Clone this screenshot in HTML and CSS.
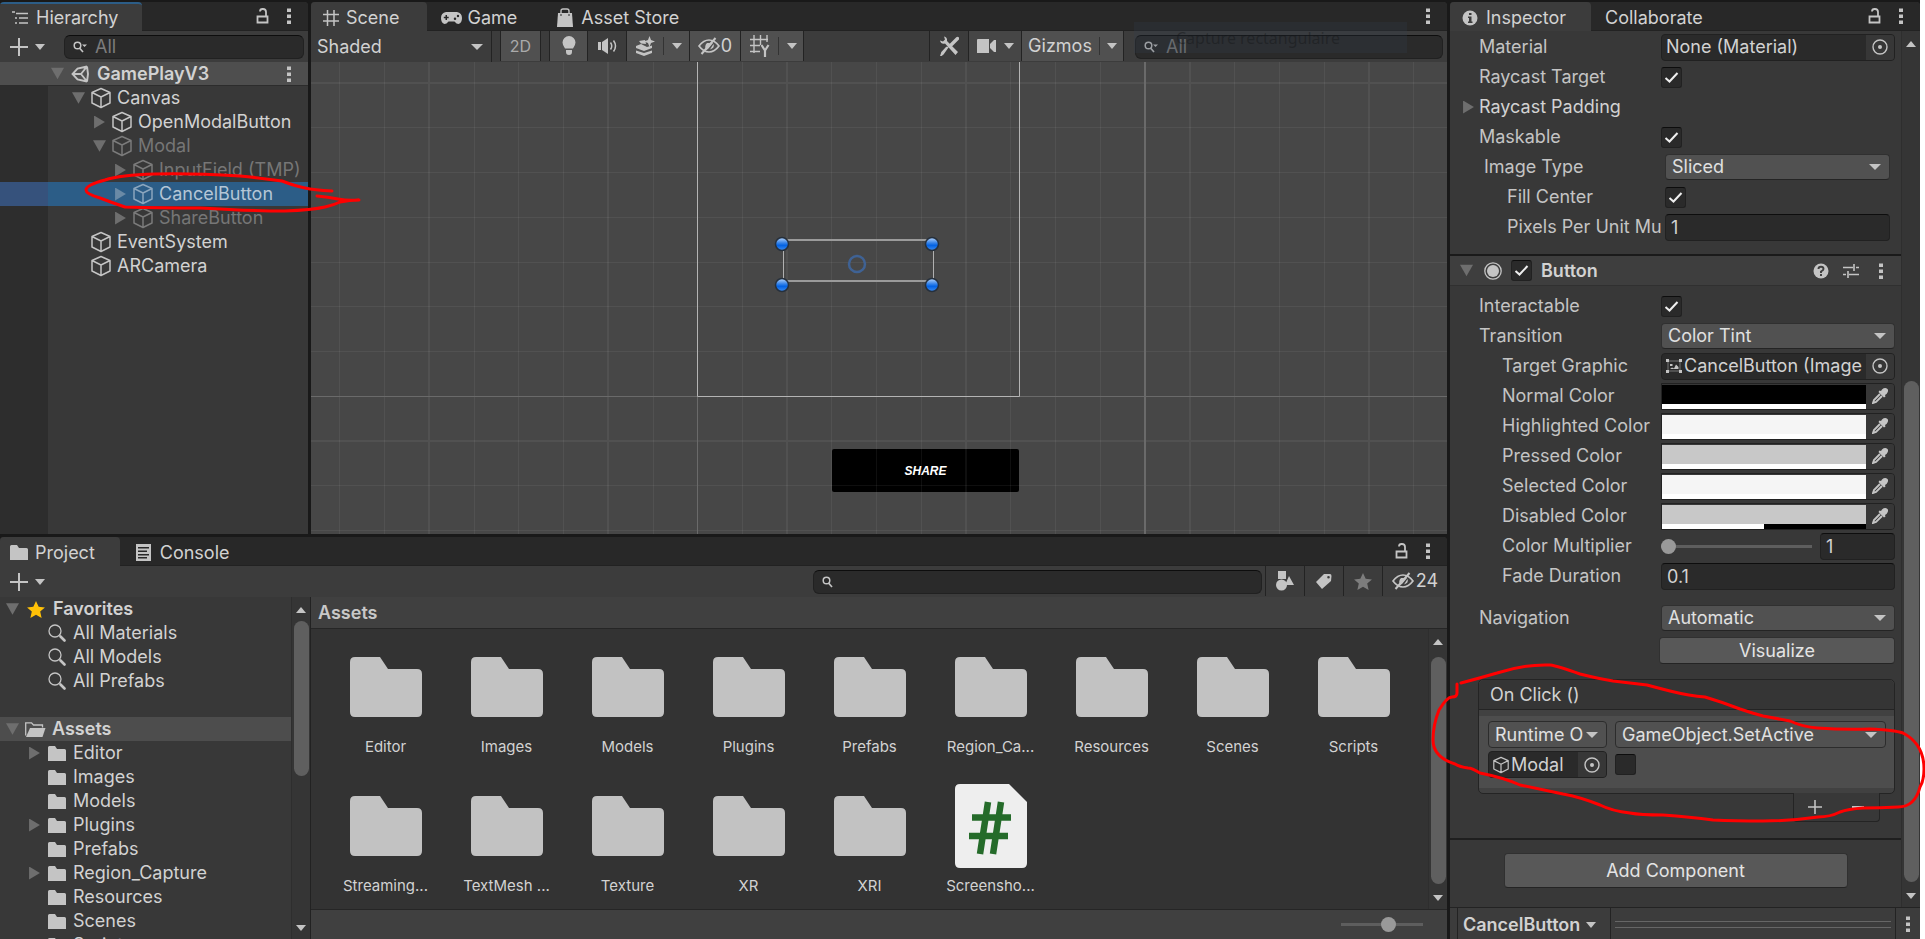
FILE: index.html
```html
<!DOCTYPE html>
<html lang="en">
<head>
<meta charset="utf-8">
<title>GamePlayV3 - Editor</title>
<link rel="stylesheet" href="styles.css">
</head>
<body>
<svg class="sprite" aria-hidden="true">
  <symbol id="i-cube" viewBox="0 0 20 22"><path d="M10 1.5 19 5.5V16L10 20.5 1 16V5.5ZM1 5.5 10 10 19 5.5M10 10V20.5" fill="none" stroke="currentColor" stroke-width="1.5" stroke-linejoin="round"/></symbol>
  <symbol id="i-folder" viewBox="0 0 18 15"><path d="M0 1.500Q0 0 1.500 0H7L9 3H16.500Q18 3 18 4.500V15H0Z" fill="currentColor"/></symbol>
  <symbol id="i-folder-big" viewBox="0 0 72 60"><path d="M0 5Q0 0 5 0H30L38 12H67Q72 12 72 17V55Q72 60 67 60H5Q0 60 0 55Z" fill="#c2c2c2"/></symbol>
  <symbol id="i-folder-open" viewBox="0 0 21 15"><path d="M.7 13.500V.8H6.500L8.500 3H17.500V5.500" fill="none" stroke="currentColor" stroke-width="1.300"/><path d="M5 6H20.500L17.500 15H1Z" fill="currentColor"/></symbol>
  <symbol id="i-lens" viewBox="0 0 18 18"><circle cx="7" cy="7" r="6" fill="none" stroke="currentColor" stroke-width="1.300"/><path d="M12.500 12.500 16.500 16.500" stroke="currentColor" stroke-width="2.600" stroke-linecap="round"/></symbol>
  <symbol id="i-find" viewBox="0 0 14 12"><circle cx="4.500" cy="4.500" r="3.300" fill="none" stroke="currentColor" stroke-width="1.500"/><path d="M6.500 7 10 11" stroke="currentColor" stroke-width="1.700"/></symbol>
  <symbol id="i-find-menu" viewBox="0 0 14 12"><circle cx="4.500" cy="4.500" r="3.300" fill="none" stroke="currentColor" stroke-width="1.500"/><path d="M6.500 7 10 11" stroke="currentColor" stroke-width="1.700"/><path d="M9 3.500H14L11.500 6Z" fill="currentColor"/></symbol>
  <symbol id="i-lock" viewBox="0 0 13 16"><path d="M1.500 8.500H11.500V14.500H1.500ZM10 8V4Q10 1 7 1H6.500Q4 1 4 3.500" fill="none" stroke="currentColor" stroke-width="1.800"/></symbol>
  <symbol id="i-dots" viewBox="0 0 4 16"><path d="M0 .5H4V4H0ZM0 6.500H4V10H0ZM0 12.500H4V16H0Z" fill="currentColor"/></symbol>
  <symbol id="i-plus" viewBox="0 0 18 18"><path d="M9 0V18M0 9H18" stroke="currentColor" stroke-width="2"/></symbol>
  <symbol id="i-list" viewBox="0 0 16 14"><path d="M0 1H3M4 2.500H16M7 7H16M7 12H16M3 7H5M3 12H5" stroke="currentColor" stroke-width="1.600"/></symbol>
  <symbol id="i-hash" viewBox="0 0 16 16"><path d="M4.500 0V16M11 0V16M0 4.500H16M0 11H16" stroke="currentColor" stroke-width="1.500"/></symbol>
  <symbol id="i-pad" viewBox="0 0 21 12"><path fill-rule="evenodd" d="M5 0H16Q21 1 21 6 21 11 17.500 12 15.500 12 13.500 9.500H7.500Q5.500 12 3.500 12 0 11 0 6 0 1 5 0ZM4.500 3V4.800H2.800V6.200H4.500V8H6V6.200H7.700V4.800H6V3ZM14 5.500A1.200 1.200 0 1 0 14 8 1.200 1.200 0 1 0 14 5.500ZM17 2.800A1.200 1.200 0 1 0 17 5.200 1.200 1.200 0 1 0 17 2.800Z" fill="currentColor"/></symbol>
  <symbol id="i-bag" viewBox="0 0 16 19"><path d="M1 5H15L16 19H0Z" fill="currentColor"/><path d="M4 8V3Q4 1 6 1H10Q12 1 12 3V8" fill="none" stroke="currentColor" stroke-width="1.400"/><path d="M4 6V8M12 6V8" stroke="#282828"/></symbol>
  <symbol id="i-info" viewBox="0 0 16 16"><circle cx="8" cy="8" r="7.500" fill="currentColor"/><path d="M7 3H9.500V5H7ZM6 6.500H9.500V11.500H10.500V13H6V11.500H7V8H6Z" fill="#3c3c3c"/></symbol>
  <symbol id="i-unity" viewBox="0 0 18 18"><path d="M16 1.500 6.500 3.500 1.500 9 6.500 14.500 16 16.500M16 1.500 17 9 16 16.500M1.500 9H10M10 9 16 1.500M10 9 16 16.500" fill="none" stroke="currentColor" stroke-width="1.900"/></symbol>
  <symbol id="i-console" viewBox="0 0 15 17"><path fill-rule="evenodd" d="M0 0H15V17H0ZM2 3V4.500H13V3ZM2 6.500V8H11V6.500ZM2 10V11.500H13V10ZM2 13V14.500H11V13Z" fill="currentColor"/></symbol>
  <symbol id="i-star" viewBox="0 0 20 19"><path d="M10 0 13 6.500 20 7.200 14.700 11.800 16.300 19 10 15.300 3.700 19 5.300 11.800 0 7.200 7 6.500Z" fill="currentColor"/></symbol>
  <symbol id="i-bulb" viewBox="0 0 14 20"><path d="M7 0A6.500 6.500 0 0 1 13.500 6.500Q13.500 9 11 12.500H3Q.5 9 .5 6.500A6.500 6.500 0 0 1 7 0ZM4 14H10V16Q10 19 7 19 4 19 4 16Z" fill="currentColor"/></symbol>
  <symbol id="i-audio" viewBox="0 0 19 16"><path d="M0 4H3V12H0ZM4 4 10 0V16L4 12Z" fill="currentColor"/><path d="M12.500 4.500Q15 8 12.500 11.500M15.500 2.500Q19.500 8 15.500 13.500" fill="none" stroke="currentColor" stroke-width="1.500"/></symbol>
  <symbol id="i-effects" viewBox="0 0 19 20"><path d="M0 10 5 8 11 11 16 9.500V12L8 15 0 12ZM0 14.500 8 17 16 14.500V17L8 20 0 17Z" fill="currentColor"/><path d="M13.500 0 15 4 19 5.500 15 7 13.500 11 12 7 8 5.500 12 4ZM3 5 9 4 10 8 5 7.500Z" fill="currentColor"/></symbol>
  <symbol id="i-eye" viewBox="0 0 22 18"><path d="M1 9Q5.500 3 11 3 16.500 3 21 9 16.500 15 11 15 5.500 15 1 9Z" fill="none" stroke="currentColor" stroke-width="1.700"/><path d="M8 13Q6 9 9 6L15 6 10 12ZM12 12.500 15.500 7Q17 11 12 12.500Z" fill="currentColor"/><path d="M3.500 17 17.500 1" stroke="currentColor" stroke-width="2"/></symbol>
  <symbol id="i-gridy" viewBox="0 0 20 22"><path d="M4 0V18M10.500 0V10M17 0V7M0 4.500H18M0 10.500H10M0 16.500H10" stroke="currentColor" stroke-width="1.400" fill="none"/><path d="M11.500 10 15 15.500 18.500 10M15 15V22" stroke="currentColor" stroke-width="2.200" fill="none"/></symbol>
  <symbol id="i-tools" viewBox="0 0 19 20"><path d="M4 0.500Q7.500 1 7 5L18 16 15.500 19 5 7.500Q1 8.500 0 4.500L3 5.500 5 3.500Z" fill="currentColor"/><path d="M17.500 2.500 10.500 9.500" stroke="currentColor" stroke-width="3.400" stroke-linecap="round"/><path d="M7.500 11.500 3 18 1 19.500 2 16.500 6.500 11.500Z" stroke="currentColor" stroke-width="1.500" fill="currentColor"/></symbol>
  <symbol id="i-camera" viewBox="0 0 19 14"><path d="M0 1Q0 0 1 0H12V14H0ZM13 5 17 1H19V13H17L13 9Z" fill="currentColor"/></symbol>
  <symbol id="i-shapes" viewBox="0 0 18 20"><path d="M2 0H10V8H2ZM13 5 18 14H9Z" fill="currentColor"/><circle cx="5.500" cy="14" r="5.500" fill="currentColor"/></symbol>
  <symbol id="i-tag" viewBox="0 0 16 16"><path fill-rule="evenodd" d="M8 1H14Q15.500 1 15.500 3L15 8 6 16 0 9ZM12.500 3A1.300 1.300 0 1 0 12.500 5.600 1.300 1.300 0 1 0 12.500 3Z" fill="currentColor"/></symbol>
  <symbol id="i-target" viewBox="0 0 16 16"><circle cx="8" cy="8" r="7" fill="none" stroke="currentColor" stroke-width="1.400"/><circle cx="8" cy="8" r="2" fill="currentColor"/></symbol>
  <symbol id="i-image" viewBox="0 0 16 14"><path d="M2 2H14V12H2Z" fill="none" stroke="currentColor" stroke-opacity=".5"/><path d="M0 0H3V3H0ZM13 0H16V3H13ZM0 11H3V14H0ZM13 11H16V14H13ZM4 5H6.500V7H4ZM4 10 6 8.500 8 9.500 10 5.500 12.500 8V10Z" fill="currentColor"/></symbol>
  <symbol id="i-dropper" viewBox="0 0 16 16"><path d="M10 1.500 9 3 7.500 2.500 6.500 4 12 9.500 13.500 8.500 13 7 14.500 6Q17 3 15.500 1 13 -1 10 1.500Z" fill="currentColor"/><path d="M8 6 2 12 1 15 4 14 10 8" fill="none" stroke="currentColor" stroke-width="1.900"/></symbol>
  <symbol id="i-help" viewBox="0 0 16 16"><circle cx="8" cy="8" r="7.500" fill="currentColor"/><path d="M5.500 6Q5.500 3.700 8 3.700 10.500 3.700 10.500 6 10.500 7.300 8 8.500V10M8 11V13" fill="none" stroke="#3e3e3e" stroke-width="1.900"/></symbol>
  <symbol id="i-preset" viewBox="0 0 16 14"><path d="M0 3.500H10M13 3.500H16M11 0V7M0 10.500H3M6 10.500H16M5 7V14" stroke="currentColor" stroke-width="1.600"/></symbol>
  <symbol id="i-button" viewBox="0 0 18 18"><circle cx="9" cy="9" r="8.200" fill="none" stroke="currentColor" stroke-width="1.300"/><circle cx="9" cy="9" r="6" fill="currentColor"/></symbol>
  <symbol id="i-script" viewBox="0 0 72 84"><path d="M0 5Q0 0 5 0H54L72 18V79Q72 84 67 84H5Q0 84 0 79Z" fill="#eee"/><path d="M33 18 25 70M46 18 38 70M17 33.500H56M14 52H53" stroke="#256b2a" stroke-width="6.500"/></symbol>
</svg>

<div class="app">
  <section class="panel hierarchy">
    <div class="tabs">
      <button class="tab active focus"><svg width="16" height="14"><use href="#i-list"/></svg>Hierarchy</button>
      <span class="tab-tools"><svg width="13" height="16"><use href="#i-lock"/></svg><svg width="4" height="16"><use href="#i-dots"/></svg></span>
    </div>
    <div class="toolbar">
      <button class="add" aria-label="Create"><svg width="18" height="18"><use href="#i-plus"/></svg><i class="caret"></i></button>
      <label class="search"><svg width="14" height="12"><use href="#i-find-menu"/></svg><input type="text" placeholder="All" aria-label="Search hierarchy"></label>
    </div>
    <div class="scene-root"><i class="fold open"></i><svg width="18" height="18"><use href="#i-unity"/></svg><b>GamePlayV3</b><svg class="end" width="4" height="16"><use href="#i-dots"/></svg></div>
    <ul class="objects">
      <li class="d0"><i class="fold open"></i><svg width="20" height="22"><use href="#i-cube"/></svg>Canvas</li>
      <li class="d1"><i class="fold"></i><svg width="20" height="22"><use href="#i-cube"/></svg>OpenModalButton</li>
      <li class="d1 off"><i class="fold open"></i><svg width="20" height="22"><use href="#i-cube"/></svg>Modal</li>
      <li class="d2 off"><i class="fold"></i><svg width="20" height="22"><use href="#i-cube"/></svg>InputField (TMP)</li>
      <li class="d2 selected"><i class="fold"></i><svg width="20" height="22"><use href="#i-cube"/></svg>CancelButton</li>
      <li class="d2 off"><i class="fold"></i><svg width="20" height="22"><use href="#i-cube"/></svg>ShareButton</li>
      <li class="d0"><i class="fold none"></i><svg width="20" height="22"><use href="#i-cube"/></svg>EventSystem</li>
      <li class="d0"><i class="fold none"></i><svg width="20" height="22"><use href="#i-cube"/></svg>ARCamera</li>
    </ul>
  </section>

  <section class="panel scene">
    <div class="tabs">
      <button class="tab active"><svg width="16" height="16"><use href="#i-hash"/></svg>Scene</button>
      <button class="tab"><svg width="21" height="12"><use href="#i-pad"/></svg>Game</button>
      <button class="tab store"><svg width="16" height="19"><use href="#i-bag"/></svg>Asset Store</button>
      <span class="tab-tools"><svg width="4" height="16"><use href="#i-dots"/></svg></span>
    </div>
    <div class="toolbar scene-bar">
      <span class="pick shading"><select aria-label="Draw mode"><option>Shaded</option></select></span>
      <button class="tool on two-d">2D</button>
      <button class="tool on bulb" aria-label="Lighting"><svg width="14" height="20"><use href="#i-bulb"/></svg></button>
      <button class="tool" aria-label="Audio"><svg width="19" height="16"><use href="#i-audio"/></svg></button>
      <button class="tool on wide" aria-label="Effects"><svg width="19" height="20"><use href="#i-effects"/></svg><i class="bar"></i><i class="caret"></i></button>
      <button class="tool on eye"><svg width="22" height="18"><use href="#i-eye"/></svg>0</button>
      <button class="tool on wide" aria-label="Grid"><svg width="20" height="22"><use href="#i-gridy"/></svg><i class="bar"></i><i class="caret"></i></button>
      <span class="space"></span>
      <button class="tool first" aria-label="Tools"><svg width="19" height="20"><use href="#i-tools"/></svg></button>
      <button class="tool cam" aria-label="Camera"><svg width="19" height="14"><use href="#i-camera"/></svg><i class="caret"></i></button>
      <button class="tool on gizmos">Gizmos<i class="bar"></i><i class="caret"></i></button>
      <label class="search"><svg width="14" height="12"><use href="#i-find-menu"/></svg><input type="text" placeholder="All" aria-label="Search scene"></label>
      <span class="ghost">Capture rectangulaire</span>
    </div>
    <div class="viewport">
      <button class="share">SHARE</button>
      <svg class="lines" width="100%" height="100%">
        <g stroke="#fff" stroke-opacity=".06">
          <path d="M28.500 0V600M73.500 0V600M163.500 0V600M207.500 0V600M252.500 0V600M342.500 0V600M431.500 0V600M520.500 0V600M565.500 0V600M610.500 0V600M699.500 0V600M744.500 0V600M789.500 0V600M923.500 0V600M968.500 0V600M1013.500 0V600M1102.500 0V600"/>
          <path d="M0 65.500H3000M0 110.500H3000M0 155.500H3000M0 200.500H3000M0 244.500H3000M0 289.500H3000M0 423.500H3000M0 468.500H3000"/>
          <path stroke-width="2" d="M118 0V600M297 0V600M476 0V600M655 0V600M879 0V600M1058 0V600M0 21H3000M0 379H3000"/>
        </g>
        <path d="M386.500 334V600M0 334.500H3000" stroke="#6a6a6a"/>
        <path d="M834 0V600" stroke="#6a6a6a" stroke-width="2"/>
        <path d="M386.500 0V334.500H708.500V0" fill="none" stroke="#b4b4b4"/>
        <path d="M472.500 178V219M622.500 178V219" stroke="#b0b0b0"/>
        <path d="M472 178H622M472 219H622" stroke="#9b9b9b" stroke-width="2"/>
        <defs><linearGradient id="dot" x2="0" y2="1"><stop offset=".1" stop-color="#9cc4f8"/><stop offset=".4" stop-color="#3a86ea"/><stop offset=".6" stop-color="#0262e4"/><stop offset="1" stop-color="#3d8cf0"/></linearGradient></defs>
        <g fill="url(#dot)" stroke="#26303c" stroke-width="1.500"><circle cx="471" cy="182" r="6.500"/><circle cx="621" cy="182" r="6.500"/><circle cx="471" cy="223" r="6.500"/><circle cx="621" cy="223" r="6.500"/></g>
        <circle cx="546" cy="202" r="8" fill="none" stroke="#3f6294" stroke-width="2.500"/>
      </svg>
    </div>
  </section>

  <section class="panel inspector">
    <div class="tabs">
      <button class="tab active"><svg width="16" height="16"><use href="#i-info"/></svg>Inspector</button>
      <button class="tab plain">Collaborate</button>
      <span class="tab-tools"><svg width="13" height="16"><use href="#i-lock"/></svg><svg width="4" height="16"><use href="#i-dots"/></svg></span>
    </div>
    <div class="split">
      <div class="form">
        <div class="row"><label for="mat">Material</label><span class="object"><input id="mat" type="text" value="None (Material)"><button aria-label="Select material"><svg width="16" height="16"><use href="#i-target"/></svg></button></span></div>
        <div class="row"><label for="rt">Raycast Target</label><input id="rt" type="checkbox" checked></div>
        <div class="row foldrow"><i class="fold"></i><span class="title">Raycast Padding</span></div>
        <div class="row"><label for="mask">Maskable</label><input id="mask" type="checkbox" checked></div>
        <div class="row inset"><label for="it">Image Type</label><span class="pick boxed"><select id="it"><option>Sliced</option></select></span></div>
        <div class="row inset sub"><label for="fc">Fill Center</label><input id="fc" type="checkbox" checked></div>
        <div class="row inset sub"><label for="ppu">Pixels Per Unit Multiplier</label><input id="ppu" type="text" value="1"></div>

        <div class="component"><i class="fold open"></i><svg width="18" height="18"><use href="#i-button"/></svg><input id="btn" type="checkbox" checked><label for="btn">Button</label><span class="component-tools"><svg width="16" height="16"><use href="#i-help"/></svg><svg width="16" height="14"><use href="#i-preset"/></svg><svg class="end" width="4" height="16"><use href="#i-dots"/></svg></span></div>

        <div class="row"><label for="inter">Interactable</label><input id="inter" type="checkbox" checked></div>
        <div class="row"><label for="trans">Transition</label><span class="pick boxed"><select id="trans"><option>Color Tint</option></select></span></div>
        <div class="row sub"><label for="tg">Target Graphic</label><span class="object"><svg width="16" height="14"><use href="#i-image"/></svg><input id="tg" type="text" value="CancelButton (Image"><button aria-label="Select graphic"><svg width="16" height="16"><use href="#i-target"/></svg></button></span></div>
        <div class="row sub"><label for="c1">Normal Color</label><span class="color"><span class="swatch"><input id="c1" type="color" value="#000000"><i class="alpha"></i></span><button aria-label="Pick normal color"><svg width="16" height="16"><use href="#i-dropper"/></svg></button></span></div>
        <div class="row sub"><label for="c2">Highlighted Color</label><span class="color"><span class="swatch"><input id="c2" type="color" value="#f5f5f5"><i class="alpha"></i></span><button aria-label="Pick highlighted color"><svg width="16" height="16"><use href="#i-dropper"/></svg></button></span></div>
        <div class="row sub"><label for="c3">Pressed Color</label><span class="color"><span class="swatch"><input id="c3" type="color" value="#c8c8c8"><i class="alpha"></i></span><button aria-label="Pick pressed color"><svg width="16" height="16"><use href="#i-dropper"/></svg></button></span></div>
        <div class="row sub"><label for="c4">Selected Color</label><span class="color"><span class="swatch"><input id="c4" type="color" value="#f5f5f5"><i class="alpha"></i></span><button aria-label="Pick selected color"><svg width="16" height="16"><use href="#i-dropper"/></svg></button></span></div>
        <div class="row sub"><label for="c5">Disabled Color</label><span class="color"><span class="swatch"><input id="c5" type="color" value="#c8c8c8"><i class="alpha half"></i></span><button aria-label="Pick disabled color"><svg width="16" height="16"><use href="#i-dropper"/></svg></button></span></div>
        <div class="row sub"><label for="cm">Color Multiplier</label><input id="cm" type="range" min="1" max="5" value="1"><input class="short" type="text" value="1" aria-label="Color multiplier value"></div>
        <div class="row sub"><label for="fd">Fade Duration</label><input id="fd" type="text" value="0.1"></div>
        <div class="row nav"><label for="nav">Navigation</label><span class="pick boxed"><select id="nav"><option>Automatic</option></select></span></div>
        <button class="push visualize">Visualize</button>

        <div class="event">
          <div class="event-box">
            <div class="event-head">On Click ()</div>
            <div class="event-item">
              <span class="pick boxed"><select aria-label="Call state"><option>Runtime Only</option></select></span>
              <span class="pick boxed"><select aria-label="Function"><option>GameObject.SetActive</option></select></span>
              <span class="object"><svg width="16" height="18"><use href="#i-cube"/></svg><input type="text" value="Modal" aria-label="Target object"><button aria-label="Select object"><svg width="16" height="16"><use href="#i-target"/></svg></button></span>
              <input type="checkbox" aria-label="Argument">
            </div>
          </div>
          <div class="event-foot"><button aria-label="Add"><svg width="14" height="14"><use href="#i-plus"/></svg></button><button aria-label="Remove"><i class="minus"></i></button></div>
        </div>
        <div class="add-area"><button class="push add-component">Add Component</button></div>
      </div>
      <div class="scroll"><i class="up"></i><i class="thumb insp"></i><i class="down"></i></div>
    </div>
    <div class="preview-bar"><button>CancelButton<i class="caret"></i></button><span class="grip"></span><span class="more"><svg width="4" height="16"><use href="#i-dots"/></svg></span></div>
  </section>

  <section class="panel project">
    <div class="tabs">
      <button class="tab active"><svg width="18" height="15"><use href="#i-folder"/></svg>Project</button>
      <button class="tab"><svg width="15" height="17"><use href="#i-console"/></svg>Console</button>
      <span class="tab-tools"><svg width="13" height="16"><use href="#i-lock"/></svg><svg width="4" height="16"><use href="#i-dots"/></svg></span>
    </div>
    <div class="toolbar">
      <button class="add" aria-label="Create asset"><svg width="18" height="18"><use href="#i-plus"/></svg><i class="caret"></i></button>
      <span class="space"></span>
      <label class="search project-search"><svg width="14" height="12"><use href="#i-find"/></svg><input type="text" aria-label="Search project"></label>
      <button class="tool first" aria-label="Filter by type"><svg width="18" height="20"><use href="#i-shapes"/></svg></button>
      <button class="tool" aria-label="Filter by label"><svg width="16" height="16"><use href="#i-tag"/></svg></button>
      <button class="tool dim" aria-label="Favorites"><svg width="18" height="17"><use href="#i-star"/></svg></button>
      <button class="tool hidden-count"><svg width="22" height="18"><use href="#i-eye"/></svg>24</button>
    </div>
    <div class="browser">
      <ul class="tree">
        <li class="top"><i class="fold open"></i><svg class="gold" width="18" height="17"><use href="#i-star"/></svg><b>Favorites</b></li>
        <li><i class="fold none"></i><svg width="18" height="18"><use href="#i-lens"/></svg>All Materials</li>
        <li><i class="fold none"></i><svg width="18" height="18"><use href="#i-lens"/></svg>All Models</li>
        <li><i class="fold none"></i><svg width="18" height="18"><use href="#i-lens"/></svg>All Prefabs</li>
        <li class="top current"><i class="fold open"></i><svg width="21" height="15"><use href="#i-folder-open"/></svg><b>Assets</b></li>
        <li><i class="fold"></i><svg width="18" height="15"><use href="#i-folder"/></svg>Editor</li>
        <li><i class="fold none"></i><svg width="18" height="15"><use href="#i-folder"/></svg>Images</li>
        <li><i class="fold none"></i><svg width="18" height="15"><use href="#i-folder"/></svg>Models</li>
        <li><i class="fold"></i><svg width="18" height="15"><use href="#i-folder"/></svg>Plugins</li>
        <li><i class="fold none"></i><svg width="18" height="15"><use href="#i-folder"/></svg>Prefabs</li>
        <li><i class="fold"></i><svg width="18" height="15"><use href="#i-folder"/></svg>Region_Capture</li>
        <li><i class="fold none"></i><svg width="18" height="15"><use href="#i-folder"/></svg>Resources</li>
        <li><i class="fold none"></i><svg width="18" height="15"><use href="#i-folder"/></svg>Scenes</li>
        <li><i class="fold none"></i><svg width="18" height="15"><use href="#i-folder"/></svg>Scripts</li>
      </ul>
      <div class="scroll tree-scroll"><i class="up"></i><i class="thumb tree-thumb"></i><i class="down"></i></div>
      <div class="files">
        <div class="crumb">Assets</div>
        <div class="split">
          <ul class="grid">
            <li><span><svg width="72" height="60"><use href="#i-folder-big"/></svg></span>Editor</li>
            <li><span><svg width="72" height="60"><use href="#i-folder-big"/></svg></span>Images</li>
            <li><span><svg width="72" height="60"><use href="#i-folder-big"/></svg></span>Models</li>
            <li><span><svg width="72" height="60"><use href="#i-folder-big"/></svg></span>Plugins</li>
            <li><span><svg width="72" height="60"><use href="#i-folder-big"/></svg></span>Prefabs</li>
            <li><span><svg width="72" height="60"><use href="#i-folder-big"/></svg></span>Region_Ca...</li>
            <li><span><svg width="72" height="60"><use href="#i-folder-big"/></svg></span>Resources</li>
            <li><span><svg width="72" height="60"><use href="#i-folder-big"/></svg></span>Scenes</li>
            <li><span><svg width="72" height="60"><use href="#i-folder-big"/></svg></span>Scripts</li>
            <li><span><svg width="72" height="60"><use href="#i-folder-big"/></svg></span>Streaming...</li>
            <li><span><svg width="72" height="60"><use href="#i-folder-big"/></svg></span>TextMesh ...</li>
            <li><span><svg width="72" height="60"><use href="#i-folder-big"/></svg></span>Texture</li>
            <li><span><svg width="72" height="60"><use href="#i-folder-big"/></svg></span>XR</li>
            <li><span><svg width="72" height="60"><use href="#i-folder-big"/></svg></span>XRI</li>
            <li><span><svg width="72" height="84"><use href="#i-script"/></svg></span>Screensho...</li>
          </ul>
          <div class="scroll"><i class="up"></i><i class="thumb"></i><i class="down"></i></div>
        </div>
        <div class="size-bar"><input type="range" min="0" max="100" value="60" aria-label="Icon size"></div>
      </div>
    </div>
  </section>
</div>

<svg class="ink" width="1925" height="939" fill="none" stroke="#f00" stroke-width="3" stroke-linecap="round" stroke-linejoin="round" aria-hidden="true">
  <path d="M332 191Q314 190 305 188Q295 186 282 181Q262 178 240 176Q190 173 155 174Q120 175 105 180Q86 185 86 190Q86 194 100 198Q113 203 125 207Q160 208 200 208Q250 211 285 211Q312 210 325 207Q334 205 340 202Q350 200 359 200Q348 201 338 199Q328 197 317 196"/>
  <path d="M1461 683Q1480 678 1497 673Q1525 664 1550 665Q1558 666 1580 674Q1600 679 1613 681L1647 685Q1658 688 1670 691Q1690 696 1705 697Q1722 702 1740 709Q1755 714 1763 716L1790 721Q1803 727 1817 728Q1845 730 1870 729Q1894 730 1903 733Q1924 744 1924 769Q1924 780 1920 787Q1915 807 1898 807Q1880 808 1863 808Q1848 809 1840 812Q1830 817 1818 817Q1790 821 1763 821Q1735 821 1713 820Q1690 817 1663 815Q1640 815 1630 813Q1612 811 1600 805Q1580 797 1563 794L1520 785Q1505 778 1480 773Q1472 768 1468 768Q1460 767 1455 764Q1433 757 1433 740Q1433 725 1439 710Q1447 697 1452 697Q1457 697 1457 693V684"/>
</svg>
</body>
</html>
```

FILE: styles.css
```css
* { box-sizing: border-box; }
body { margin: 0; padding-right: 5px; background: #fff; color: #d2d2d2; font: 18px/24px Inter, "Noto Sans", sans-serif; overflow: hidden; }
ul { list-style: none; margin: 0; padding: 0; }
button, input, select { font: inherit; color: inherit; background: none; border: 0; margin: 0; padding: 0; min-width: 0; }
svg { display: block; flex: none; color: #c4c4c4; }
.sprite { position: absolute; width: 0; height: 0; }

.app { display: grid; grid-template-columns: 308px minmax(0, 1fr) 470px; grid-template-rows: minmax(0, 1fr) 402px; gap: 3px; height: 100vh; padding-top: 2px; background: #191919; }
.panel { display: flex; flex-direction: column; min-width: 0; min-height: 0; overflow: hidden; background: #383838; border-radius: 4px 4px 0 0; }
.inspector { grid-column: 3; grid-row: 1 / 3; }
.project { grid-column: 1 / 3; grid-row: 2; }

.tabs { display: flex; flex: none; height: 29px; background: #282828; }
.tab { display: flex; align-items: center; gap: 8px; padding: 3px 24px 0 12px; line-height: 24px; border-bottom: 1px solid #222; }
.tab.active { padding-top: 2px; background: #3c3c3c; border-bottom: 0; border-radius: 0 4px 0 0; }
.tab.focus { padding-top: 0; border-top: 2px solid #2c5d87; }
.inspector .tab.active { padding-right: 25px; }
.tab.plain { padding-left: 14px; }
.scene .tab { gap: 7px; padding-right: 28px; }
.scene .tab + .tab { gap: 5px; padding-left: 14px; padding-right: 26px; }
.scene .tab.store { gap: 8px; }
.project .tab { gap: 7px; padding-left: 10px; padding-right: 25px; }
.project .tab + .tab { gap: 9px; padding-left: 16px; }
.tab-tools { flex: 1; display: flex; align-items: center; justify-content: flex-end; gap: 18px; padding-right: 17px; border-bottom: 1px solid #222; }

.toolbar { display: flex; flex: none; align-items: center; height: 31px; background: #3c3c3c; position: relative; }
.add { display: flex; align-items: center; gap: 7px; width: 64px; padding-left: 10px; height: 30px; }
.caret { flex: none; border: 5px solid transparent; border-top: 6px solid #c4c4c4; border-bottom: 0; }
.search { display: flex; align-items: center; gap: 8px; height: 24px; flex: 1; margin-right: 4px; padding-left: 8px; background: #2a2a2a; border: 1px solid #212121; border-top-color: #0d0d0d; border-radius: 6px; }
.search input { width: 100%; outline: 0; }
.search input::placeholder { color: #7c7c7c; opacity: 1; }
.space { flex: 1; }
.tool { display: flex; align-items: center; justify-content: center; gap: 8px; height: 30px; width: 39px; align-self: flex-start; border-right: 1px solid #232323; }
.tool.on { background: #505050; }
.tool.first { border-left: 1px solid #232323; width: 40px; }
.tool .bar { width: 1px; height: 18px; background: #333; }
.tool.wide { width: 63px; gap: 8px; padding-left: 9px; justify-content: flex-start; }
.tool.eye { width: 51px; gap: 1px; }
.tool.cam { width: 53px; background: #464646; }
.tool.gizmos { width: 102px; gap: 7px; }
.tool.two-d { width: 41px; margin: 0 8px; border-left: 1px solid #232323; font-size: 16px; color: #aaa; }
.tool.bulb { border-left: 1px solid #232323; }
.tool.dim svg { color: #7d7d7d; }
.tool.hidden-count { width: 64px; gap: 2px; border-right: 0; }
.project-search { flex: 0 1 449px; margin-right: 3px; }
.scene-bar .search { flex: 0 1 308px; margin-left: 11px; }
.shading { width: 181px; align-self: stretch; border-right: 1px solid #232323; }
.ghost { position: absolute; right: 40px; top: -9px; width: 273px; height: 31px; padding: 4px 0 0 42px; background: rgba(50, 62, 74, .28); color: rgba(20, 22, 24, .45); font-family: "Noto Sans", sans-serif; font-size: 16px; pointer-events: none; }

.pick { position: relative; display: flex; min-width: 0; }
.pick select { appearance: none; width: 100%; padding: 0 24px 0 6px; outline: 0; text-overflow: clip; }
.pick::after { content: ""; position: absolute; right: 8px; top: 50%; margin-top: -3px; border: 6px solid transparent; border-top: 6px solid #c4c4c4; border-bottom: 0; pointer-events: none; }
.boxed { height: 26px; background: #515151; border: 1px solid #303030; border-bottom-color: #242424; border-radius: 4px; color: #e0e0e0; }

.fold { flex: none; width: 13px; height: 13px; background: #6e6e6e; clip-path: polygon(8% 0, 92% 50%, 8% 100%); }
.fold.open { clip-path: polygon(0 6%, 100% 6%, 50% 94%); }
.fold.none { background: none; }
.scene-root { display: flex; flex: none; align-items: center; height: 24px; padding-left: 51px; padding-right: 17px; gap: 7px; background: #4e4e4e; border-bottom: 1px solid #2c2c2c; }
.scene-root .end { margin-left: auto; }
.scene-root b { font-weight: 600; margin-left: 1px; }
.objects { flex: 1; background: linear-gradient(90deg, #2d2d2d 48px, transparent 48px); }
.objects li { display: flex; align-items: center; gap: 6px; height: 24px; white-space: nowrap; }
.d0 { padding-left: 72px; }
.d1 { padding-left: 93px; }
.d2 { padding-left: 114px; }
.off { color: #767676; }
.off svg { color: #7a7a7a; }
.selected { background: linear-gradient(90deg, #36527c 48px, #2c5d87 48px); color: #b4c6d6; }
.selected svg { color: #8aa5bd; }
.selected .fold { background: #6a8aa6; }

.viewport { position: relative; flex: 1; min-height: 0; background: #474747; overflow: hidden; }
.lines { position: absolute; inset: 0; pointer-events: none; }
.share { position: absolute; left: 521px; top: 387px; width: 187px; height: 43px; background: #000; border-radius: 2px; color: #fff; font: italic bold 12px/20px "Liberation Sans Narrow", "Liberation Sans", sans-serif; }

.split { display: flex; flex: 1; min-height: 0; }
.form { flex: 1; min-width: 0; padding-top: 1px; }
.row { display: flex; align-items: center; height: 30px; padding: 0 6px 0 29px; color: #c4c4c4; }
.row label { flex: none; width: 182px; white-space: nowrap; overflow: hidden; }
.row.sub label { padding-left: 23px; }
.row.inset { padding: 0 11px 0 34px; }
.row.inset label { width: 181px; border-right: 3px solid transparent; }
.foldrow { padding-left: 12px; gap: 4px; color: #d2d2d2; }
.row .pick, .row .object, .row .color { flex: 1; }
.row input[type="text"] { flex: 1; }
input[type="text"] { outline: 0; }
.row > input[type="text"] { height: 27px; padding-left: 5px; background: #2a2a2a; border: 1px solid #212121; border-top-color: #0d0d0d; border-radius: 4px; color: #d2d2d2; }
.row > input.short { flex: none; width: 75px; margin-left: 8px; }
input[type="checkbox"] { appearance: none; flex: none; width: 21px; height: 21px; border: 1px solid #212121; border-top-color: #0d0d0d; border-radius: 3px; background: #2a2a2a; }
input[type="checkbox"]:checked { background-image: url("data:image/svg+xml,%3Csvg xmlns='http://www.w3.org/2000/svg' viewBox='0 0 19 19'%3E%3Cpath d='M3.500 10 7.500 13.500 15.500 5' fill='none' stroke='%23eee' stroke-width='2'/%3E%3C/svg%3E"); }
.object { display: flex; align-items: center; min-width: 0; height: 27px; padding-left: 4px; background: #2a2a2a; border: 1px solid #212121; border-radius: 4px; color: #d2d2d2; overflow: hidden; }
.object button, .color button { display: grid; place-items: center; flex: none; width: 28px; height: 25px; background: #373737; }
.object input { flex: 1; width: 0; }
.object > svg { margin-right: 2px; }
.color { display: flex; height: 27px; background: #373737; border: 1px solid #212121; border-radius: 0 4px 4px 0; overflow: hidden; }
.swatch { flex: 1; display: flex; flex-direction: column; padding-top: 1px; }
.swatch input { appearance: none; width: 100%; height: 19px; }
.swatch input::-webkit-color-swatch-wrapper { padding: 0; }
.swatch input::-webkit-color-swatch { border: 0; border-radius: 0; }
.alpha { height: 5px; background: #fff; }
.alpha.half { background: linear-gradient(90deg, #fff 50%, #000 50%); }

input[type="range"] { appearance: none; flex: 1; height: 16px; background: linear-gradient(#5e5e5e, #5e5e5e) center / 100% 3px no-repeat; outline: 0; }
input[type="range"]::-webkit-slider-thumb { appearance: none; width: 15px; height: 15px; border-radius: 50%; background: #999; }

.component { display: flex; align-items: center; height: 32px; margin: 12px 0 5px; padding: 0 18px 0 10px; gap: 9px; background: #3e3e3e; border-top: 2px solid #1a1a1a; border-bottom: 1px solid #303030; font-weight: 600; }
.component > svg { margin-left: 2px; }
.component-tools { margin-left: auto; display: flex; align-items: center; gap: 14px; }
.component-tools .end { margin-left: 6px; }
.row.nav { margin-top: 12px; }
.push { display: block; background: #585858; border: 1px solid #303030; border-bottom-color: #242424; border-radius: 4px; color: #e4e4e4; }
.visualize { height: 27px; width: 236px; margin: 4px 6px 0 auto; }
.event { margin: 15px 6px 16px 28px; }
.event-box { border: 1px solid #242424; border-radius: 5px; background: #414141; padding-bottom: 5px; }
.event-head { height: 30px; padding: 3px 11px; background: #353535; border-bottom: 1px solid #242424; border-radius: 5px 5px 0 0; margin-bottom: 6px; }
.event-item { display: grid; grid-template-columns: 119px minmax(0, 1fr); grid-template-rows: 27px 27px; gap: 3px 8px; align-items: center; padding: 5px 8px 10px 9px; background: #4d4d4d; }
.event-item .boxed { height: 27px; border-color: #2c2c2c; }
.event-item .pick:first-child select { padding-right: 22px; }
.event-foot { display: flex; width: 87px; height: 29px; margin: -1px 15px 0 auto; background: #383838; border: 1px solid #242424; border-top: 0; border-radius: 0 0 4px 4px; }
.event-foot button { flex: 1; display: grid; place-items: center; }
.minus { width: 12px; height: 2px; background: #c4c4c4; }
.add-area { border-top: 2px solid #1f1f1f; padding-top: 13px; }
.add-component { width: 344px; height: 35px; margin: 0 auto; }
.preview-bar { display: flex; flex: none; height: 32px; padding-left: 7px; background: #3c3c3c; border-top: 1px solid #232323; }
.preview-bar button { display: flex; align-items: center; gap: 6px; width: 154px; padding: 2px 0 0 5px; border: 1px solid #232323; border-width: 0 1px; font-weight: 600; }
.grip { flex: 1; height: 7px; margin: 13px 4px 0; border: 1px solid #666; border-width: 1px 0; }
.more { display: grid; place-items: center; width: 25px; border-left: 1px solid #232323; }

.scroll { display: flex; flex-direction: column; align-items: center; flex: none; width: 19px; padding: 10px 0 8px; background: #353535; border-left: 1px solid #2e2e2e; }
.up { border: 5px solid transparent; border-bottom: 6px solid #c4c4c4; border-top: 0; }
.down { border: 5px solid transparent; border-top: 6px solid #c4c4c4; border-bottom: 0; }
.thumb { flex: 1; width: 15px; margin: 12px 0 11px; border-radius: 8px; background: #5f5f5f; }
.thumb.insp { margin-top: 334px; }

.browser { display: flex; flex: 1; min-height: 0; }
.tree { width: 291px; flex: none; overflow: hidden; }
.tree li { display: flex; align-items: center; gap: 7px; height: 24px; padding-left: 28px; }
.tree .top { padding-left: 6px; gap: 8px; }
.tree .current { margin-top: 24px; background: #4d4d4d; gap: 6px; }
.tree b, .crumb { font-weight: 600; }
.gold { color: #ffc107; }
.tree-scroll { width: 20px; border-right: 1px solid #222; }
.tree-thumb { flex: 0 0 155px; margin-top: 8px; margin-bottom: auto; }
.files { display: flex; flex-direction: column; flex: 1; min-width: 0; }
.crumb { flex: none; height: 32px; padding: 4px 7px; background: #404040; border-bottom: 1px solid #262626; color: #c8c8c8; }
.files .split { background: #333; }
.grid { flex: 1; display: grid; grid-template-columns: repeat(auto-fill, 121px); grid-auto-rows: 139px; align-content: start; padding: 10px 0 0 14px; overflow: hidden; }
.grid li { text-align: center; font-size: 15px; }
.grid span { display: grid; place-items: center; height: 96px; }
.size-bar { display: flex; flex: none; align-items: center; justify-content: flex-end; height: 30px; padding-right: 24px; background: #404040; border-top: 1px solid #262626; }
.size-bar input { flex: none; width: 82px; }

.ink { position: absolute; left: 0; top: 0; pointer-events: none; }
```
